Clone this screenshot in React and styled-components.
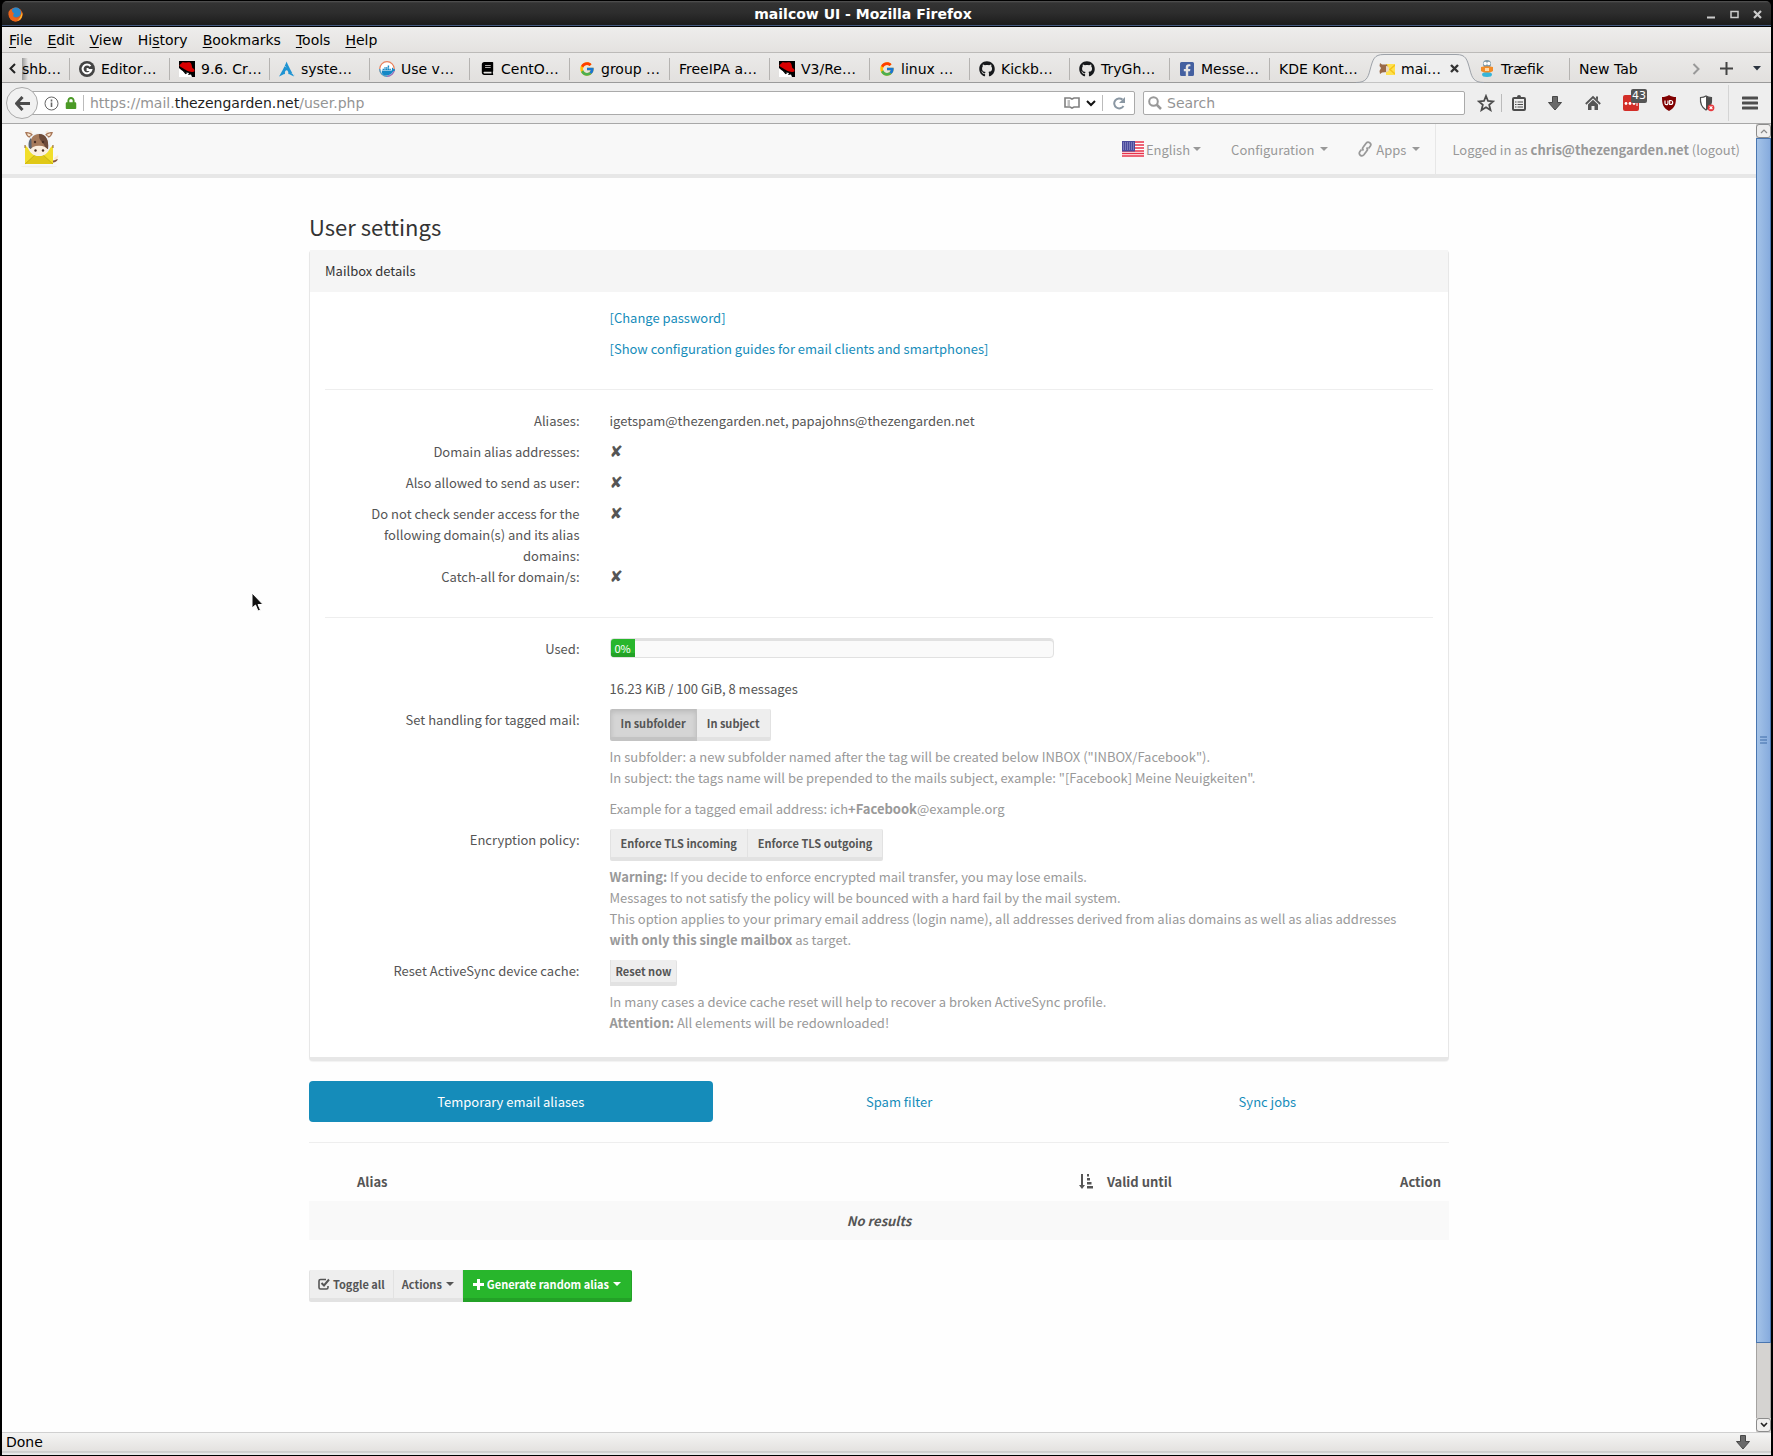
import React from 'react'
import styled, { createGlobalStyle, css } from 'styled-components'
import { FaGithub, FaFacebookSquare, FaDocker, FaLock, FaBook } from 'react-icons/fa'
import { FcGoogle } from 'react-icons/fc'
import { SiArchlinux } from 'react-icons/si'

const tabs = [
  { title: 'Editor…', icon: 'editor' },
  { title: '9.6. Cr…', icon: 'redhat' },
  { title: 'syste…', icon: 'arch' },
  { title: 'Use v…', icon: 'docker' },
  { title: 'CentO…', icon: 'book' },
  { title: 'group …', icon: 'google' },
  { title: 'FreeIPA a…' },
  { title: 'V3/Re…', icon: 'redhat' },
  { title: 'linux …', icon: 'google' },
  { title: 'Kickb…', icon: 'github' },
  { title: 'TryGh…', icon: 'github' },
  { title: 'Messe…', icon: 'facebook' },
  { title: 'KDE Kont…', last: true },
  { title: 'mai…', icon: 'mailcow', active: true },
  { title: 'Træfik', icon: 'traefik' },
  { title: 'New Tab', last: true },
]

const menus = [
  ['', 'F', 'ile'],
  ['', 'E', 'dit'],
  ['', 'V', 'iew'],
  ['Hi', 's', 'tory'],
  ['', 'B', 'ookmarks'],
  ['', 'T', 'ools'],
  ['', 'H', 'elp'],
]

const RedHat = () => (
  <svg width="16" height="16" viewBox="0 0 16 16">
    <rect width="16" height="16" fill="#000" />
    <path d="M0 7c3 3 6 4.500 10 5L9 14l3-.5 1 2.500H0z" fill="#fff" />
    <path d="M3 1.500c2-1 3 .5 5 0s4-.5 4.500 2l.8 3.500c2 1 2.700 2 2 3.500-2 1-6.500 0-9.300-2S-.5 5 .6 4s1.800-1.500 2.400-2.500z" fill="#d80000" />
    <path d="M3.500 9.500l5 2.500-2 1.300z" fill="#000" />
  </svg>
)

const Editor = () => (
  <svg width="16" height="16" viewBox="0 0 16 16">
    <circle cx="8" cy="8" r="8" fill="#444" />
    <path d="M11.500 5.200A4.400 4.400 0 1 0 12.300 9H8.600V7" fill="none" stroke="#fff" strokeWidth="2" />
  </svg>
)

const Docker = () => (
  <svg width="16" height="16" viewBox="0 0 16 16">
    <circle cx="8" cy="8" r="7.300" fill="#fff" stroke="#e9815c" strokeWidth="1.200" />
    <path d="M.7 8A7.300 7.300 0 0 0 8 15.300" fill="none" stroke="#38a6dc" strokeWidth="1.200" />
    <path d="M8 15.300A7.300 7.300 0 0 0 15.300 8" fill="none" stroke="#8a6fd0" strokeWidth="1.200" />
    <FaDocker x="2.500" y="2.500" width="11" height="11" color="#1488c6" />
  </svg>
)

const Cow = ({ width, height }) => (
  <svg width={width} height={height} viewBox="0 0 38 38">
    <ellipse cx="18" cy="36.500" rx="18" ry="1" fill="#eee" />
    <path d="M31 31c2 1 4 0 5-2" fill="none" stroke="#8a5a3c" strokeWidth="2" />
    <path d="M33 28l4-3c1 2-1 5-3 5z" fill="#fbe9d3" />
    <path d="M4 15l5 5h18l5-5v19H4z" fill="#f2de2a" />
    <path d="M4 34l11-10h6l11 10z" fill="#e0c817" />
    <path d="M4 34l11-10M32 34L21 24" stroke="#b9a50f" strokeWidth=".7" />
    <path d="M4 15v3M32 15v3" stroke="#8a5a3c" />
    <path d="M11 3C9 3 8 1 9 0c0 1 2 1 3 2zM25 3c2 0 3-2 2-3 0 1-2 1-3 2z" fill="#f8ead9" />
    <path d="M12 5C10 9 6 9 4 2c3 0 6 0 8 3zM24 5c2 4 6 4 8-3-3 0-6 0-8 3z" fill="#a97858" />
    <path d="M10 5C8 7 7 6 6 3.500 8 3.500 9.500 4 10 5zM26 5c2 2 3 1 4-1.500C28 3.500 26.500 4 26 5z" fill="#fbe9d3" />
    <circle cx="18" cy="14.500" r="11.500" fill="#eef1f4" />
    <path d="M9 19C8 9 12 4 18 4s10 5 9 15H9z" fill="#a67a5a" />
    <path d="M18 4c7 0 10 6 9 15l-3-1c0-6-7-6-6-14z" fill="#6d4b39" />
    <path d="M8 18c-1-5 0-8 2-10 1 4 0 8 1 11z" fill="#5a6470" />
    <ellipse cx="18" cy="20.500" rx="8.500" ry="4.800" fill="#fbefe0" />
    <g fill="#4a3024">
      <circle cx="14" cy="12" r="1.200" />
      <circle cx="22" cy="12" r="1.200" />
      <circle cx="14.500" cy="20.500" r="1.200" />
      <circle cx="22" cy="20.500" r="1.200" />
    </g>
  </svg>
)

const MailcowFavicon = () => (
  <svg width="16" height="16" viewBox="0 0 16 16">
    <path d="M7 3h9v11H7z" fill="#ffe14d" />
    <path d="M16 4l-5 4.500L16 13" fill="none" stroke="#f5c21b" strokeWidth="1.500" />
    <path d="M1 2l2 1.500h5L9 7l-1 4-5 .5L1 13l-.5-3L2 7 .5 5z" fill="#9a6a48" />
    <path d="M7 5c2.500 0 3 1.500 3 3s-.5 3-3 3z" fill="#ead9c6" />
  </svg>
)

const Traefik = () => (
  <svg width="14" height="17" viewBox="0 0 14 17">
    <ellipse cx="7" cy="14.500" rx="5" ry="2.500" fill="#37b5d8" />
    <circle cx="7" cy="4" r="4" fill="#7e98a6" />
    <circle cx="5.300" cy="3.500" r="1.700" fill="#fff" />
    <circle cx="8.700" cy="3.500" r="1.700" fill="#fff" />
    <path d="M1 7c4-1 8-1 12 0v4c-3 2-9 2-12 0z" fill="#f28c28" />
    <path d="M5 8h4v3H5z" fill="#ffd9a8" />
  </svg>
)

const tabIcons = {
  editor: <Editor />,
  redhat: <RedHat />,
  arch: <SiArchlinux size={16} color="#1e93d2" />,
  docker: <Docker />,
  book: <FaBook size={13} color="#000" />,
  google: <FcGoogle size={16} />,
  github: <FaGithub size={16} color="#16181b" />,
  facebook: <FaFacebookSquare size={16} color="#4460a0" />,
  mailcow: <MailcowFavicon />,
  traefik: <Traefik />,
}

const FirefoxLogo = () => (
  <svg width="15" height="15" viewBox="0 0 15 15">
    <circle cx="7.500" cy="7.500" r="7" fill="#e2571c" />
    <circle cx="8" cy="5.500" r="5" fill="#2a87c8" />
    <path d="M.6 5c0 6 3 9.500 7 9.500 5 0 7.500-4 6.800-9-1 4-3.500 6.500-6.400 5.500C4 10 5 7 6.500 6.500 4 6 4 3 3.500 2 2 3 1 4 .6 5z" fill="#e8661b" />
    <path d="M14 5c1 4-1 8-5 9 3-2 4-5 5-9z" fill="#fbc531" />
  </svg>
)

const Star = () => (
  <svg width="18" height="18" viewBox="0 0 18 18">
    <path d="M9 2l2 5 5.200.4-4 3.500 1.300 5.200L9 13.300l-4.500 2.800 1.300-5.200-4-3.500L7 7z" fill="none" stroke="#4c4c4c" strokeWidth="1.800" />
  </svg>
)

const Clipboard = () => (
  <svg width="16" height="18" viewBox="0 0 16 18">
    <rect x="2" y="4" width="12" height="12" rx="1" fill="none" stroke="#4c4c4c" strokeWidth="2" />
    <path d="M4 5h8V3h-2a2 2 0 0 0-4 0H4z" fill="#4c4c4c" />
    <path d="M4 8h1.500M6.500 8H12M4 10.500h1.500M6.500 10.500H12M4 13h1.500M6.500 13H12" stroke="#4c4c4c" strokeWidth="1.200" />
  </svg>
)

const Arrow = () => (
  <svg width="14" height="15" viewBox="0 0 14 15">
    <path d="M4.500.5h5v6h4L7 14 .5 6.500h4z" fill="#6a6a6a" stroke="#484848" />
  </svg>
)

const Home = () => (
  <svg width="16" height="16" viewBox="0 0 16 16">
    <path d="M.8 9L8 2l7.200 7" fill="none" stroke="#555" strokeWidth="1.800" />
    <path d="M11 1.500h2v4l-2-2zM3 9.500l5-4.800 5 4.800V15H9.500v-4h-3v4H3z" fill="#555" />
  </svg>
)

const LastPass = () => (
  <svg width="16" height="16" viewBox="0 0 16 16">
    <rect width="16" height="16" rx="2" fill="#d32d27" />
    <g fill="#fff">
      <circle cx="3" cy="8.500" r="1.400" />
      <circle cx="7" cy="8.500" r="1.400" />
      <circle cx="11" cy="8.500" r="1.400" />
      <path d="M13.500 6h1v5h-1z" />
    </g>
  </svg>
)

const UBlock = () => (
  <svg width="16" height="16" viewBox="0 0 16 16">
    <path d="M8 0c2 1.500 4.500 2 7 2 0 7-1 11-7 14C2 13 1 9 1 2c2.500 0 5-.5 7-2z" fill="#800000" />
    <path d="M4 5.500v2.700a1.500 1.500 0 0 0 3 0V5.500M8.700 5.500v4h1a2 2 0 0 0 0-4z" fill="none" stroke="#fff" strokeWidth="1.200" />
  </svg>
)

const Shield = () => (
  <svg width="16" height="17" viewBox="0 0 16 17">
    <path d="M7 1c1.500 1 3.500 1.500 5.500 1.500C13 8 12 12 7 15 2 12 1 8 1.500 2.500 3.500 2.500 5.500 2 7 1z" fill="#fff" stroke="#4c4c4c" strokeWidth="1.200" />
    <path d="M7 1c1.500 1 3.500 1.500 5.500 1.500C13 8 12 12 7 15z" fill="#4c4c4c" />
    <circle cx="12" cy="12.800" r="3.400" fill="#e8383d" />
    <path d="M10.600 11.400l2.800 2.800m0-2.800l-2.800 2.800" stroke="#fff" strokeWidth="1.200" />
  </svg>
)

const Flag = () => (
  <svg width="22" height="16" viewBox="0 0 22 16">
    <rect width="22" height="16" fill="#fff" />
    <path d="M0 1h22M0 4h22M0 7h22M0 10h22M0 12.500h22M0 15h22" stroke="#e8324a" strokeWidth="1.500" />
    <rect width="13" height="10.500" fill="#4a4a9c" />
    <path d="M1 2h11M1 4h11M1 6h11M1 8h11" stroke="#a9a9d6" strokeDasharray="1 1" />
  </svg>
)

const LinkIcon = () => (
  <svg width="14" height="16" viewBox="0 0 14 16" fill="none" stroke="#999" strokeWidth="1.800">
    <path d="M5.500 9.500C4.300 8.500 4.500 7 5.300 6l2.800-3.700C9 1.200 10.600 1 11.700 1.800s1.300 2.400.5 3.500L10.500 7.500" />
    <path d="M8.500 6.500c1.200 1 1 2.500.2 3.500l-2.800 3.700c-.9 1.100-2.500 1.300-3.600.5s-1.300-2.400-.5-3.500L3.500 8.500" />
  </svg>
)

const SortIcon = () => (
  <svg width="14" height="15" viewBox="0 0 14 15" fill="#555">
    <path d="M2 0h2v11h2l-3 4-3-4h2zM8 0h2v2.500H8zM8 4h3v2.500H8zM8 8h4.500v2.500H8zM8 12h6v2.500H8z" />
  </svg>
)

const CheckIcon = () => (
  <svg width="12" height="12" viewBox="0 0 12 12" fill="none" stroke="#555">
    <path d="M8 1.500H2.500Q1 1.500 1 3v6.500Q1 11 2.500 11h6q1.500 0 1.500-1.500V8" strokeWidth="1.600" />
    <path d="M3.500 5l2.500 2.500L11 1.500" strokeWidth="2" />
  </svg>
)

const PlusIcon = () => (
  <svg width="11" height="11" viewBox="0 0 11 11" fill="#fff">
    <path d="M4 0h3v4h4v3H7v4H4V7H0V4h4z" />
  </svg>
)

const Row = ({ label, children }) => (
  <FormRow>
    <Label>{label}</Label>
    <Value>{children}</Value>
  </FormRow>
)

const App = () => {
  return (
    <Window>
      <GlobalStyle />
      <TitleBar>
        <FirefoxLogo />
        <WindowTitle>mailcow UI - Mozilla Firefox</WindowTitle>
        <WindowButtons>
          <WindowButton aria-label="Minimize">
            <svg width="9" height="9"><path d="M0 7.500h8" stroke="#ccc" strokeWidth="2" /></svg>
          </WindowButton>
          <WindowButton aria-label="Maximize">
            <svg width="9" height="9"><path d="M1 1.500h7v6H1z" fill="none" stroke="#ccc" strokeWidth="1.500" /></svg>
          </WindowButton>
          <WindowButton aria-label="Close">
            <svg width="9" height="9"><path d="M1 1l7 7M8 1L1 8" stroke="#ccc" strokeWidth="2.200" /></svg>
          </WindowButton>
        </WindowButtons>
      </TitleBar>

      <MenuBar>
        {menus.map(([before, key, after]) => (
          <MenuButton key={key + after}>{before}<u>{key}</u>{after}</MenuButton>
        ))}
      </MenuBar>

      <TabStrip>
        <ScrollTabs aria-label="Scroll tabs left">
          <svg width="7" height="11"><path d="M6 1L1.500 5.500 6 10" fill="none" stroke="#222" strokeWidth="2" /></svg>
        </ScrollTabs>
        <ClippedTab>shb…</ClippedTab>
        {tabs.map((tab) => (
          <Tab key={tab.title} $active={tab.active} $last={tab.last}>
            {tab.active && (
              <TabShape width="128" height="30" viewBox="0 0 128 30">
                <path d="M0 29.500C10 29.500 12 25 14 17C17 6 18 1.500 28 1.500H100C110 1.500 111 6 114 17C116 25 118 29.500 128 29.500" fill="#eee" stroke="#9ca1a8" />
              </TabShape>
            )}
            {tab.icon && <TabIcon>{tabIcons[tab.icon]}</TabIcon>}
            <TabTitle>{tab.title}</TabTitle>
            {tab.active && (
              <CloseIcon width="9" height="9"><path d="M1 1l7 7M8 1L1 8" stroke="#333" strokeWidth="2.400" /></CloseIcon>
            )}
          </Tab>
        ))}
        <StripEnd>
          <IconButton aria-label="Scroll tabs right">
            <svg width="8" height="12"><path d="M1.500 1L6.500 6l-5 5" fill="none" stroke="#999" strokeWidth="2" /></svg>
          </IconButton>
          <IconButton aria-label="New tab">
            <svg width="13" height="13"><path d="M6.500 0v13M0 6.500h13" stroke="#444" strokeWidth="2" /></svg>
          </IconButton>
          <IconButton aria-label="List all tabs">
            <svg width="8" height="5"><path d="M0 0h8L4 4.500z" fill="#2b3440" /></svg>
          </IconButton>
        </StripEnd>
      </TabStrip>

      <NavToolbar>
        <BackButton aria-label="Back">
          <svg width="15" height="15" viewBox="0 0 15 15"><path d="M7.500 1L1.500 7.500l6 6.500M2 7.500h13" fill="none" stroke="#4c4c4c" strokeWidth="3" /></svg>
        </BackButton>
        <UrlBar>
          <svg width="15" height="15" viewBox="0 0 15 15" fill="none" stroke="#666">
            <circle cx="7.500" cy="7.500" r="6.500" />
            <path d="M7.500 6.500V11M7.500 3.500v2" strokeWidth="1.600" />
          </svg>
          <FaLock size={12} color="#4b9a26" />
          <Separator $height="16px" />
          <Url role="textbox" aria-label="Address" contentEditable suppressContentEditableWarning spellCheck={false}>
            https://mail.<b>thezengarden.net</b>/user.php
          </Url>
          <svg width="16" height="12" viewBox="0 0 16 12" fill="none" stroke="#808080" strokeWidth="1.600">
            <path d="M1 1h5l2 1 2-1h5v9h-5l-2 1-2-1H1z" />
            <path d="M3.500 4h2.500M3.500 6h2.500M3.500 8h2.500" strokeWidth="1" />
          </svg>
          <svg width="10" height="7"><path d="M1 1l4 4 4-4" fill="none" stroke="#111" strokeWidth="2" /></svg>
          <Separator $height="16px" />
          <Reload width="13" height="13" viewBox="0 0 13 13">
            <path d="M10.500 9A5 5 0 1 1 9.500 2.600" fill="none" stroke="#8a97a3" strokeWidth="2" />
            <path d="M12 0v6H6z" fill="#8a97a3" />
          </Reload>
        </UrlBar>
        <SearchBar>
          <svg width="14" height="14" viewBox="0 0 14 14" fill="none" stroke="#999" strokeWidth="2">
            <circle cx="5.500" cy="5.500" r="4.300" />
            <path d="M8.500 8.500L13 13" strokeWidth="2.500" />
          </svg>
          <SearchInput aria-label="Search" placeholder="Search" />
        </SearchBar>
        <ToolButton $width="30px" aria-label="Bookmark this page"><Star /></ToolButton>
        <Separator $height="18px" />
        <ToolButton $width="34px" aria-label="Show bookmarks"><Clipboard /></ToolButton>
        <ToolButton aria-label="Downloads"><Arrow /></ToolButton>
        <ToolButton aria-label="Home"><Home /></ToolButton>
        <ToolButton aria-label="LastPass"><LastPass /><Badge>43</Badge></ToolButton>
        <ToolButton aria-label="uBlock"><UBlock /></ToolButton>
        <ToolButton aria-label="Privacy"><Shield /></ToolButton>
        <MenuSeparator $height="36px" />
        <ToolButton $width="42px" aria-label="Open menu">
          <svg width="16" height="14"><path d="M1 2h14M1 7h14M1 12h14" stroke="#4c4c4c" strokeWidth="3" strokeLinecap="round" /></svg>
        </ToolButton>
      </NavToolbar>

      <Viewport>
        <Page>
          <Navbar>
            <Brand href="#"><Cow width="38" height="38" /></Brand>
            <NavLink href="#"><Flag />English<Caret /></NavLink>
            <NavLink href="#">Configuration <Caret $gap /></NavLink>
            <NavLink href="#"><LinkIcon /><AppsText>Apps</AppsText> <Caret $gap /></NavLink>
            <Session href="#">Logged in as <b>chris@thezengarden.net</b> (logout)</Session>
          </Navbar>

          <Container>
            <Heading>User settings</Heading>
            <Panel>
              <PanelHeading>Mailbox details</PanelHeading>
              <PanelBody>
                <Row>
                  <p><a href="#">[Change password]</a></p>
                  <p><a href="#">[Show configuration guides for email clients and smartphones]</a></p>
                </Row>
                <Rule $inset />
                <Row label="Aliases:"><p>igetspam@thezengarden.net, papajohns@thezengarden.net</p></Row>
                <Row label="Domain alias addresses:"><Cross>✘</Cross></Row>
                <Row label="Also allowed to send as user:"><Cross>✘</Cross></Row>
                <Row label="Do not check sender access for the following domain(s) and its alias domains:"><Cross>✘</Cross></Row>
                <Row label="Catch-all for domain/s:"><Cross>✘</Cross></Row>
                <Rule $inset />
                <Row label="Used:">
                  <Progress role="progressbar" aria-label="Used" aria-valuenow={0}>
                    <ProgressBar>0%</ProgressBar>
                  </Progress>
                  <p>16.23 KiB / 100 GiB, 8 messages</p>
                </Row>
                <Row label="Set handling for tagged mail:">
                  <ButtonGroup>
                    <Button $active>In subfolder</Button>
                    <Button>In subject</Button>
                  </ButtonGroup>
                  <Help>
                    In subfolder: a new subfolder named after the tag will be created below INBOX ("INBOX/Facebook").<br />
                    In subject: the tags name will be prepended to the mails subject, example: "[Facebook] Meine Neuigkeiten".
                  </Help>
                  <Help>Example for a tagged email address: ich<b>+Facebook</b>@example.org</Help>
                </Row>
                <Row label="Encryption policy:">
                  <ButtonGroup>
                    <Button>Enforce TLS incoming</Button>
                    <Button>Enforce TLS outgoing</Button>
                  </ButtonGroup>
                  <Help>
                    <b>Warning:</b> If you decide to enforce encrypted mail transfer, you may lose emails.<br />
                    Messages to not satisfy the policy will be bounced with a hard fail by the mail system.<br />
                    This option applies to your primary email address (login name), all addresses derived from alias domains as well as alias addresses<br />
                    <b>with only this single mailbox</b> as target.
                  </Help>
                </Row>
                <Row label="Reset ActiveSync device cache:">
                  <ButtonGroup>
                    <Button $small>Reset now</Button>
                  </ButtonGroup>
                  <Help>
                    In many cases a device cache reset will help to recover a broken ActiveSync profile.<br />
                    <b>Attention:</b> All elements will be redownloaded!
                  </Help>
                </Row>
              </PanelBody>
            </Panel>

            <Pills>
              <Pill href="#" $active>Temporary email aliases</Pill>
              <Pill href="#">Spam filter</Pill>
              <Pill href="#">Sync jobs</Pill>
            </Pills>
            <Rule />

            <AliasTable>
              <colgroup>
                <col width="40" />
                <col />
                <col width="20%" />
                <col width="150" />
              </colgroup>
              <thead>
                <tr>
                  <th aria-label="Select" />
                  <th>Alias</th>
                  <th><SortLabel><SortIcon />Valid until</SortLabel></th>
                  <ActionHead>Action</ActionHead>
                </tr>
              </thead>
              <tbody>
                <tr><td colSpan="4">No results</td></tr>
              </tbody>
            </AliasTable>

            <ButtonGroup>
              <Button $tight><CheckIcon /> Toggle all</Button>
              <Button $tight>Actions <Caret /></Button>
              <Button $success><PlusIcon /> Generate random alias <Caret /></Button>
            </ButtonGroup>
          </Container>
        </Page>

        <Scrollbar>
          <ScrollButton aria-label="Scroll up">
            <svg width="8" height="5"><path d="M1 4l3-3 3 3" fill="none" stroke="#888" strokeWidth="1.200" /></svg>
          </ScrollButton>
          <Thumb>
            <svg width="7" height="8"><path d="M0 1h7M0 4h7M0 7h7" stroke="#3f6ca8" /></svg>
          </Thumb>
          <Track />
          <ScrollButton aria-label="Scroll down">
            <svg width="8" height="6"><path d="M1 1l3 3 3-3" fill="none" stroke="#222" strokeWidth="1.600" /></svg>
          </ScrollButton>
        </Scrollbar>
      </Viewport>

      <StatusBar>
        Done
        <Arrow />
      </StatusBar>

      <Pointer width="14" height="20" viewBox="0 0 14 20">
        <path d="M1 1v15l3.500-3L7 19l2.500-1L7 12.500h5z" fill="#111" stroke="#fff" />
      </Pointer>
    </Window>
  )
}

export default App

const GlobalStyle = createGlobalStyle`
  * {
    box-sizing: border-box;
  }

  body {
    margin: 0;
    background: #000;
    font-family: 'DejaVu Sans', sans-serif;
    font-size: 14px;
    color: #000;
  }

  button {
    font: inherit;
    color: inherit;
    background: none;
    border: 0;
    padding: 0;
  }

  svg {
    flex-shrink: 0;
  }
`

const Window = styled.div`
  position: relative;
  display: flex;
  flex-direction: column;
  min-height: 100vh;
  padding: 1px 2px;
  background: #000;
`

const TitleBar = styled.div`
  display: flex;
  align-items: center;
  height: 25px;
  padding: 2px 9px 0 6px;
  border-bottom: 1px solid #43597f;
  border-radius: 5px 5px 0 0;
  background: linear-gradient(#555 0, #333 2px, #2d2d2d 50%, #1c1c1c);
  color: #fff;
`

const WindowTitle = styled.div`
  flex: 1;
  padding-right: 4px;
  text-align: center;
  font-weight: bold;
`

const WindowButtons = styled.div`
  display: flex;
  gap: 14px;
`

const WindowButton = styled.button`
  display: flex;
`

const MenuBar = styled.div`
  display: flex;
  align-items: center;
  height: 26px;
  margin-top: 1px;
  border-bottom: 1px solid #bcbab8;
  background: linear-gradient(#eeedec, #e4e2e0);
`

const MenuButton = styled.button`
  padding: 0 8px 0 7px;

  u {
    text-underline-offset: 2px;
  }
`

const TabStrip = styled.div`
  display: flex;
  align-items: center;
  height: 30px;
  padding-top: 2px;
  border-bottom: 1px solid #9a9a9a;
  background: linear-gradient(#ebeae9, #e2e0de);
`

const ScrollTabs = styled.button`
  display: flex;
  align-items: center;
  justify-content: center;
  width: 20px;
  height: 100%;
`

const ClippedTab = styled.button`
  width: 48px;
  height: 22px;
  overflow: hidden;
  border-right: 1px solid #b5b3b1;
  background: linear-gradient(90deg, #999, transparent 6px);
  text-align: left;
`

const Tab = styled.button`
  position: relative;
  display: flex;
  align-items: center;
  gap: 6px;
  flex: 0 0 100px;
  height: 22px;
  padding-left: 9px;
  border-right: 1px solid #b5b3b1;
  white-space: nowrap;

  ${(props) => props.$last && css`
    border-color: transparent;
  `}

  ${(props) => props.$active && css`
    z-index: 1;
    border-color: transparent;
  `}
`

const TabShape = styled.svg`
  position: absolute;
  left: -14px;
  top: -5px;
`

const TabIcon = styled.span`
  position: relative;
  display: flex;
  justify-content: center;
  width: 16px;
`

const TabTitle = styled.span`
  position: relative;
`

const CloseIcon = styled.svg`
  position: relative;
  margin-left: 3px;
`

const StripEnd = styled.div`
  display: flex;
  align-items: center;
  gap: 20px;
  margin-left: auto;
  padding-right: 10px;
`

const IconButton = styled.button`
  display: flex;
`

const NavToolbar = styled.div`
  display: flex;
  align-items: center;
  height: 41px;
  padding-left: 4px;
  border-bottom: 1px solid #a8a8a8;
  background: #eee;
`

const BackButton = styled.button`
  z-index: 1;
  display: flex;
  align-items: center;
  justify-content: center;
  width: 32px;
  height: 32px;
  margin-right: -8px;
  border: 1px solid #aaa;
  border-radius: 50%;
  background: #f1f1f1;
`

const Field = styled.div`
  display: flex;
  align-items: center;
  height: 24px;
  border: 1px solid #aaa;
  border-radius: 2px;
  background: #fff;
`

const UrlBar = styled(Field)`
  flex: 1;
  gap: 6px;
  padding: 0 8px 0 13px;
`

const Url = styled.div`
  flex: 1;
  color: #949494;
  outline: 0;
  white-space: nowrap;

  b {
    color: #222;
    font-weight: normal;
  }
`

const Reload = styled.svg`
  margin-left: 4px;
`

const SearchBar = styled(Field)`
  width: 322px;
  gap: 5px;
  margin: 0 6px 0 8px;
  padding-left: 4px;
`

const SearchInput = styled.input`
  flex: 1;
  border: 0;
  outline: 0;
  padding: 0;
  background: none;
  font: inherit;

  &::placeholder {
    color: #949494;
  }
`

const Separator = styled.span`
  width: 1px;
  height: ${(props) => props.$height};
  background: #bbb;
`

const MenuSeparator = styled(Separator)`
  margin-left: 2px;
  background: #d4d4d4;
`

const ToolButton = styled.button`
  position: relative;
  display: flex;
  align-items: center;
  justify-content: center;
  width: ${(props) => props.$width || '38px'};
  height: 32px;
`

const Badge = styled.span`
  position: absolute;
  left: 19px;
  top: 2px;
  padding: 0 1px;
  border-radius: 2px;
  background: #555;
  color: #fff;
  font-size: 11px;
  line-height: 14px;
`

const Viewport = styled.div`
  display: flex;
  flex: 1;
  background: #fefefe;
`

const Page = styled.div`
  flex: 1;
  font-family: 'Noto Sans CJK SC', sans-serif;
  font-size: 13px;
  line-height: 21px;
  color: #555;

  a {
    color: #158cba;
    text-decoration: none;
  }

  p {
    margin: 0 0 10px;
  }
`

const Navbar = styled.nav`
  display: flex;
  align-items: center;
  height: 54px;
  border-bottom: 4px solid #e7e7e7;
  background: #f8f8f8;
`

const Brand = styled.a`
  display: flex;
  margin-right: auto;
  padding-left: 19px;
`

const NavLink = styled.a`
  display: flex;
  align-items: center;
  gap: 2px;
  padding: 0 15px;

  && {
    color: #999;
  }
`

const AppsText = styled.span`
  padding-left: 2px;
`

const Session = styled(NavLink)`
  display: block;
  height: 50px;
  padding: 0 16px;
  border-left: 1px solid #e7e7e7;
  line-height: 51px;
`

const Caret = styled.span`
  display: inline-block;
  margin-left: ${(props) => (props.$gap ? '4px' : '1px')};
  border: 4px solid transparent;
  border-top-color: currentColor;
  border-bottom: 0;
  vertical-align: middle;
`

const Container = styled.main`
  max-width: 1140px;
  margin: 0 auto;
  padding-top: 32px;
`

const Heading = styled.h3`
  margin: 0 0 8px;
  color: #333;
  font-size: 22px;
  font-weight: normal;
  line-height: 32px;
`

const Panel = styled.section`
  border: 1px solid #e7e7e7;
  border-top: 0;
  border-bottom-width: 4px;
  border-radius: 4px;
  background: #fff;
  box-shadow: 0 1px 1px rgba(0, 0, 0, 0.05);
`

const PanelHeading = styled.div`
  padding: 10px 15px 11px;
  background: #f5f5f5;
  color: #333;
`

const PanelBody = styled.div`
  padding: 15px 0 14px;
`

const FormRow = styled.div`
  display: grid;
  grid-template-columns: 25% 75%;
`

const Label = styled.div`
  padding: 0 15px 0 30px;
  text-align: right;
`

const Value = styled.div`
  padding: 0 15px;
`

const Rule = styled.hr`
  height: 1px;
  margin: ${(props) => (props.$inset ? '20px 15px' : '20px 0 19px')};
  border: 0;
  background: #eee;
`

const Cross = styled.p`
  font-family: 'DejaVu Sans', sans-serif;
  font-size: 16px;
`

const Progress = styled.div`
  width: 54%;
  height: 20px;
  margin-bottom: 20px;
  overflow: hidden;
  border: 1px solid #e1e1e1;
  border-radius: 4px;
  background: #fafafa;
  box-shadow: inset 0 2px 0 #e1e1e1;
`

const ProgressBar = styled.div`
  width: 24px;
  height: 100%;
  background: #28b62c;
  box-shadow: inset 0 -4px 0 #23a127;
  color: #fff;
  font-size: 11px;
  line-height: 19px;
  text-align: center;
`

const ButtonGroup = styled.div`
  display: flex;
`

const Button = styled.button`
  display: flex;
  align-items: center;
  gap: 3px;
  height: 32px;
  padding: 0 10px;
  border: solid #e2e2e2;
  border-width: 0 1px 4px;
  background: #eee;
  color: #555;
  font-size: 11px;
  font-weight: bold;

  & + & {
    border-left-width: 0;
  }

  &:first-child {
    border-radius: 2px 0 0 2px;
  }

  &:last-child {
    border-radius: 0 2px 2px 0;
  }

  ${(props) => props.$active && css`
    border-color: #c3c3c3;
    background: #d5d5d5;
    box-shadow: inset 0 3px 5px rgba(0, 0, 0, 0.125);
  `}

  ${(props) => props.$small && css`
    height: 26px;
    padding: 0 5px;
  `}

  ${(props) => props.$tight && css`
    padding: 0 8px;
  `}

  ${(props) => props.$success && css`
    border-color: #23a127;
    background: #28b62c;
    color: #fff;
  `}
`

const Help = styled.p`
  padding-top: 5px;
  color: #999;

  & + & {
    padding-top: 0;
  }
`

const Pills = styled.nav`
  display: grid;
  grid-template-columns: 40fr 37fr 36fr;
  margin-top: 20px;
`

const Pill = styled.a`
  padding: 10px 15px;
  border-radius: 4px;
  text-align: center;

  ${(props) => props.$active && css`
    background: #158cba;

    && {
      color: #fff;
    }
  `}
`

const AliasTable = styled.table`
  width: 100%;
  margin-bottom: 30px;
  border-collapse: collapse;
  table-layout: fixed;

  th,
  td {
    padding: 9px 8px;
    text-align: left;
  }

  td {
    background: #f9f9f9;
    font-style: italic;
    font-weight: bold;
    text-align: center;
  }
`

const ActionHead = styled.th`
  && {
    text-align: right;
  }
`

const SortLabel = styled.span`
  display: flex;
  align-items: center;
  gap: 14px;
`

const Scrollbar = styled.div`
  display: flex;
  flex-direction: column;
  width: 15px;
  background: #d5d3d1;
`

const ScrollButton = styled.button`
  display: flex;
  align-items: center;
  justify-content: center;
  height: 14px;
  border: 1px solid #8c8c8c;
  border-radius: 3px;
  background: #f0efee;
`

const Thumb = styled.div`
  display: flex;
  flex: 16;
  align-items: center;
  justify-content: center;
  border: 1px solid #4a76b0;
  background: linear-gradient(90deg, #a4c3e8, #86abdd);
`

const Track = styled.div`
  flex: 1;
  border: solid #a5a3a1;
  border-width: 0 1px;
`

const StatusBar = styled.footer`
  display: flex;
  align-items: center;
  justify-content: space-between;
  height: 23px;
  padding: 0 21px 4px 4px;
  border-top: 1px solid #d0d0d0;
  background: linear-gradient(#f4f4f3, #e4e2e0 18px, #bbb 19px, #e8e8e8 20px);
`

const Pointer = styled.svg`
  position: absolute;
  left: 251px;
  top: 592px;
`
